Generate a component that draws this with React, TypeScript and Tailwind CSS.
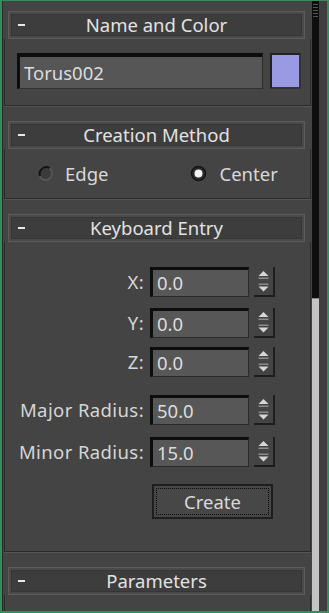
import React from "react";

const font = { fontFamily: '"Noto Sans", "Open Sans", sans-serif' };

function Header({ title }: { title: string }) {
  return (
    <div className="relative z-10 ml-[3px] mr-[5px] h-[28px] border border-[#5c5c5c] bg-[#4a4a4a] p-[2px]">
      <div className="flex h-full items-center border border-[#363636] bg-[#3d3d3d]">
        <div className="ml-[6px] h-[2px] w-[7px] bg-[#e8e8e8]" />
        <div className="flex-1 pr-[13px] text-center text-[18.5px] leading-none text-[#e2e2e2]">{title}</div>
      </div>
    </div>
  );
}

function Rollout({ title, children, last }: { title: string; children?: React.ReactNode; last?: boolean }) {
  return (
    <div
      className={
        "mx-[1px] flex flex-col border-x border-[#2a2a2a] " +
        (last ? "flex-1" : "border-b shadow-[0_1px_0_#555]")
      }
    >
      <div className="-mx-[1px] bg-[#444444] px-[1px]">
        <Header title={title} />
      </div>
      {children}
    </div>
  );
}

function Spinner() {
  return (
    <div className="flex h-[30px] w-[21px] flex-col items-center justify-center gap-[3px] border-r-2 border-b-2 border-[#1d1d1d] bg-[#444]">
      <svg width="11" height="9" viewBox="0 0 11 9">
        <path d="M5.5 0 L10.5 5 L0.5 5 Z" fill="#d6d6d6" />
        <rect x="0.5" y="6.5" width="10" height="1.5" fill="#8a8a8a" />
      </svg>
      <svg width="11" height="9" viewBox="0 0 11 9">
        <rect x="0.5" y="0.5" width="10" height="1.5" fill="#8a8a8a" />
        <path d="M0.5 3.5 L10.5 3.5 L5.5 8.5 Z" fill="#d6d6d6" />
      </svg>
    </div>
  );
}

function Field({ label, value, mt }: { label: string; value: string; mt: string }) {
  return (
    <div className={"flex h-[30px] items-center " + mt}>
      <div className="w-[145px] pr-[6px] text-right text-[18.5px] tracking-[0.4px] text-[#d6d6d6]">{label}</div>
      <div className="flex h-[30px] w-[99px] items-center border-t-[3px] border-l-[3px] border-[#0d0d0d] border-r border-b border-r-[#2a2a2a] border-b-[#2a2a2a] bg-[#575757] pl-[4px] text-[18.5px] text-[#dcdcdc]">
        {value}
      </div>
      <div className="ml-[5px]">
        <Spinner />
      </div>
    </div>
  );
}

function Radio({ checked }: { checked?: boolean }) {
  return (
    <svg width="17" height="17" viewBox="0 0 17 17">
      {checked ? (
        <>
          <circle cx="8.5" cy="8.5" r="7" fill="#2a2a2a" stroke="#151515" strokeWidth="1.5" />
          <circle cx="8.5" cy="8.5" r="4" fill="#f2f2f2" />
        </>
      ) : (
        <>
          <circle cx="8.5" cy="8.5" r="6.5" fill="#3b3b3b" stroke="#5a5a5a" strokeWidth="1.5" />
          <path d="M3 11 A6.5 6.5 0 0 1 12.5 3.2" fill="none" stroke="#121212" strokeWidth="2" />
        </>
      )}
    </svg>
  );
}

export default function App() {
  return (
    <div
      className="flex h-[613px] w-[329px] overflow-hidden border-t border-l-2 border-r-2 border-b-2 border-[#3b8a5c] bg-[#444444]"
      style={font}
    >
      <div className="flex w-[310px] flex-col border-l border-[#2a2a2a] bg-[#444444] pt-[10px]">
        <Rollout title="Name and Color">
          <div className="flex items-center pt-[14px] pb-[16px] pl-[12px]">
            <div className="flex h-[36px] w-[246px] items-center border-t-[4px] border-l-[3px] border-[#0d0d0d] border-r border-b border-r-[#2a2a2a] border-b-[#333] bg-[#565656] pl-[4px] text-[18.5px] text-[#dcdcdc]">
              Torus002
            </div>
            <div className="ml-[7px] h-[36px] w-[31px] border-2 border-t-[#222] border-l-[#222] border-r-[#333] border-b-[#333] bg-[#9a9ae4]" />
          </div>
        </Rollout>
        <div className="h-[15px]" />
        <Rollout title="Creation Method">
          <div className="flex h-[49px] items-center text-[18.5px] text-[#d8d8d8]">
            <div className="ml-[32px] flex items-center">
              <Radio />
              <span className="ml-[11px]">Edge</span>
            </div>
            <div className="ml-[82px] flex items-center">
              <Radio checked />
              <span className="ml-[12px]">Center</span>
            </div>
          </div>
        </Rollout>
        <div className="h-[15px]" />
        <Rollout title="Keyboard Entry">
          <div className="flex flex-col pt-[25px] pb-[32px]">
            <Field label="X:" value="0.0" mt="" />
            <Field label="Y:" value="0.0" mt="mt-[11px]" />
            <Field label="Z:" value="0.0" mt="mt-[9px]" />
            <Field label="Major Radius:" value="50.0" mt="mt-[18px]" />
            <Field label="Minor Radius:" value="15.0" mt="mt-[12px]" />
            <div className="ml-[147px] mt-[17px] flex h-[35px] w-[121px] items-center justify-center border-2 border-[#1e1e1e] bg-[#474747] p-[2px]">
              <div className="flex h-full w-full items-center justify-center border border-dotted border-[#0a0a0a] text-[18.5px] text-[#d8d8d8]">
                Create
              </div>
            </div>
          </div>
        </Rollout>
        <div className="h-[15px]" />
        <Rollout title="Parameters" last />
      </div>
      <div className="relative flex w-[7px] flex-col bg-[#0e0e0e]">
        <div className="mt-[3px] flex flex-col gap-[2px] px-[1px]">
          <div className="h-[1px] bg-[#555]" />
          <div className="h-[1px] bg-[#555]" />
          <div className="h-[1px] bg-[#555]" />
          <div className="h-[1px] bg-[#555]" />
          <div className="h-[1px] bg-[#555]" />
        </div>
        <div className="mt-auto h-[313px] border-t border-[#888] bg-[#c4c4c4]" />
      </div>
      <div className="flex-1 bg-[#3e3e3e]" />
    </div>
  );
}
